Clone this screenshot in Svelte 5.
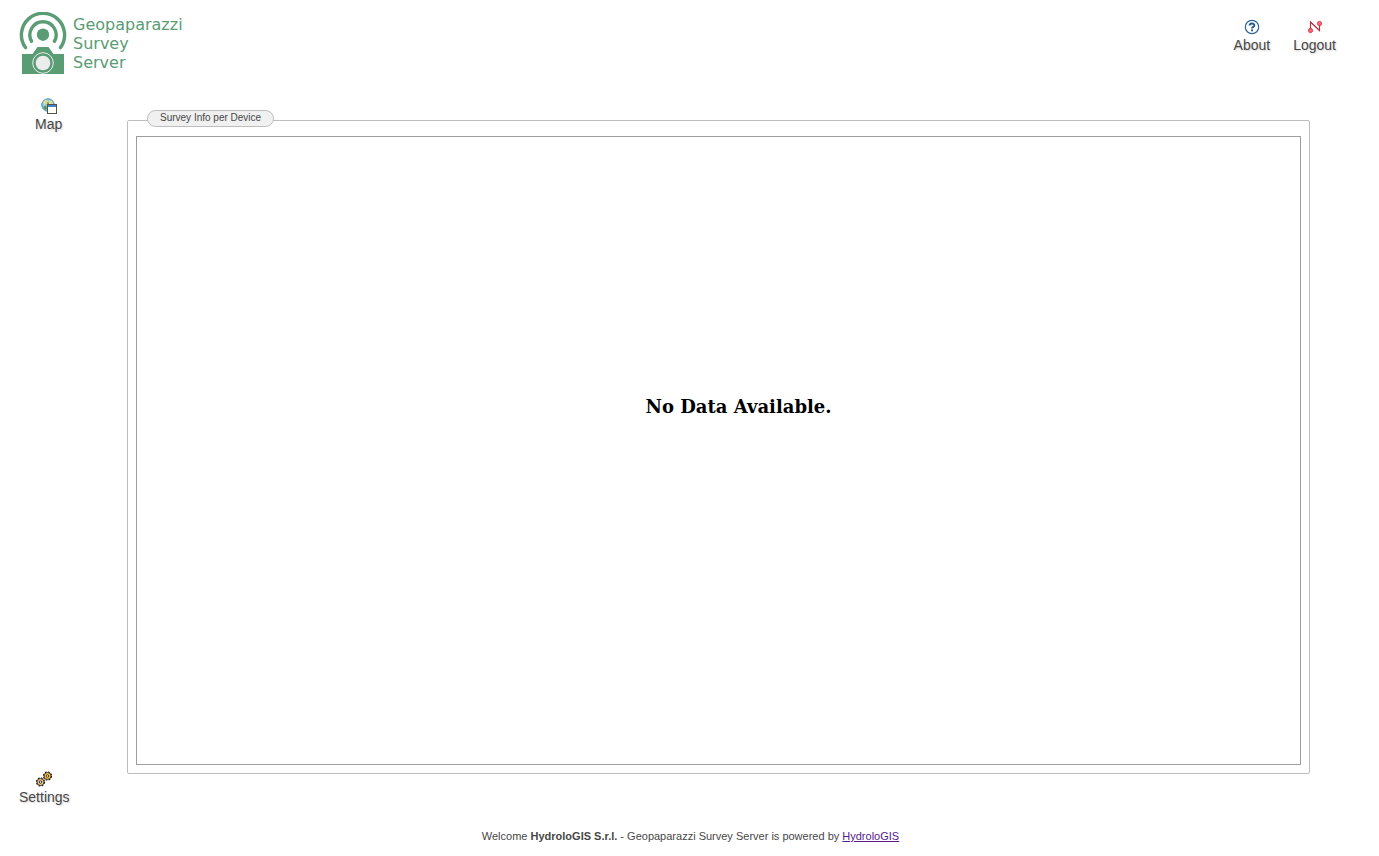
<script>
  const company = 'HydroloGIS';
</script>

<div class="page">
  <header>
    <div class="brand">
      <svg width="48" height="63" viewBox="0 0 48 63" aria-hidden="true">
        <g fill="none" stroke="#5a9c74" stroke-width="3.4" stroke-linecap="round">
          <path d="M6.500 35.600A21.600 21.600 0 1 1 41.500 35.600" />
          <path d="M12.600 29.300A13.100 13.100 0 1 1 35.400 29.300" />
        </g>
        <circle cx="24" cy="22.700" r="6.200" fill="#5a9c74" />
        <path fill="#5a9c74" d="M3 42H13.500L18.500 35H29.500L34.500 42H45V62H3Z" />
        <circle cx="24" cy="51" r="10.300" fill="none" stroke="#e8ece9" stroke-width="1" />
        <circle cx="24" cy="51" r="7.300" fill="#ececec" />
      </svg>
      <h1>Geopaparazzi<br />Survey<br />Server</h1>
    </div>
    <nav class="actions" aria-label="Account">
      <button type="button">
        <svg width="16" height="16" viewBox="0 0 16 16" aria-hidden="true">
          <circle cx="8" cy="8" r="6.700" fill="#fff" stroke="#2e6499" stroke-width="1.200" />
          <path d="M5.600 6.500C5.700 3.800 10.400 3.900 10.300 6.500C10.200 8 8 7.700 8 9.500" fill="none" stroke="#1f5790" stroke-width="1.900" />
          <path d="M7 10.500h2v1.700H7z" fill="#1f5790" />
        </svg>
        About
      </button>
      <button type="button">
        <svg width="16" height="16" viewBox="0 0 16 16" aria-hidden="true">
          <path d="M3.500 11V3L12.500 11.500V4" fill="none" stroke="#b0313f" stroke-width="1.200" />
          <circle cx="3.500" cy="11.500" r="2.100" fill="#f66a78" stroke="#e43b4d" />
          <circle cx="12.500" cy="4.500" r="2.100" fill="#f66a78" stroke="#e43b4d" />
        </svg>
        Logout
      </button>
    </nav>
  </header>

  <div class="body">
    <nav class="side" aria-label="Main">
      <button type="button" class="map">
        <svg width="16" height="16" viewBox="0 0 16 16" aria-hidden="true">
          <circle cx="7" cy="7" r="6.200" fill="#8fcbe5" stroke="#3c8fc0" />
          <path d="M2 4L5 1.500L7 3L5.500 6L3 7ZM8 2L11 3L12 6H8Z" fill="#e6dc8a" />
          <path d="M2 9L5 7.500L6 11L4 12ZM6 4L8 5L7 7Z" fill="#51965b" />
          <rect x="6.500" y="6.500" width="9" height="9" fill="#fff" stroke="#5c513f" />
          <path d="M7 7H15V9H7Z" fill="#3d86c9" />
        </svg>
        Map
      </button>
      <button type="button" class="settings">
        <svg width="16" height="16" viewBox="0 0 16 16" aria-hidden="true">
          {#each [[4.5, 11, '#e2c184'], [11.5, 5, '#f5b93c']] as [x, y, fill]}
            <g transform="translate({x} {y})">
              <circle r="4" fill="none" stroke="#17130f" stroke-width="1.200" stroke-dasharray="1.800 1.342" />
              <circle r="3.500" {fill} stroke="#17130f" stroke-width=".700" />
              <circle r="1.200" fill="#fff" stroke="#17130f" stroke-width=".800" />
            </g>
          {/each}
        </svg>
        Settings
      </button>
    </nav>

    <main>
      <h2>Survey Info per Device</h2>
      <div class="chart">
        <p>No Data Available.</p>
      </div>
    </main>
  </div>

  <footer>
    Welcome <strong>{company} S.r.l.</strong> - Geopaparazzi Survey Server is powered by
    <a href="#hydrologis">{company}</a>
  </footer>
</div>

<style>
  :global(body) {
    background: #fff;
  }
  .page {
    box-sizing: border-box;
    min-height: 100vh;
    display: flex;
    flex-direction: column;
    color: #474747;
    font-family: "Liberation Sans", Arial, sans-serif;
  }
  header {
    display: flex;
    justify-content: space-between;
    align-items: flex-start;
    padding: 12px 43px 0 19px;
  }
  .brand {
    display: flex;
    gap: 6px;
  }
  svg {
    display: block;
  }
  h1 {
    margin: 3px 0 0;
    color: #5a9c74;
    font: 400 16px/19px "DejaVu Sans", sans-serif;
  }
  .actions {
    display: flex;
    gap: 23px;
    padding-top: 7px;
  }
  button {
    display: flex;
    flex-direction: column;
    align-items: center;
    gap: 2px;
    padding: 0;
    border: 0;
    background: none;
    color: inherit;
    font: 14px/16px "Liberation Sans", Arial, sans-serif;
    text-shadow: 1px 1px 2px #d0d0d0;
    cursor: pointer;
  }
  .body {
    flex: 1;
    display: flex;
  }
  .side {
    width: 127px;
    flex: none;
    box-sizing: border-box;
    display: flex;
    flex-direction: column;
    justify-content: space-between;
    align-items: flex-start;
    padding: 23px 0 24px 19px;
  }
  .map {
    margin-left: 16px;
  }
  main {
    position: relative;
    flex: 1;
    box-sizing: border-box;
    display: flex;
    margin: 45px 69px 55px 0;
    padding: 15px 8px 8px;
    border: 1px solid #bdbdbd;
    border-radius: 2px;
  }
  h2 {
    position: absolute;
    top: -11px;
    left: 19px;
    margin: 0;
    padding: 0 12px 1px;
    border: 1px solid #bdbdbd;
    border-radius: 9px;
    background: #f0f0f0;
    font-size: 10px;
    font-weight: 400;
    line-height: 14px;
  }
  .chart {
    flex: 1;
    display: flex;
    flex-direction: column;
    align-items: center;
    padding-left: 40px;
    border: 1px solid #9d9d9d;
  }
  .chart::before {
    content: "";
    flex: 3;
  }
  .chart::after {
    content: "";
    flex: 4;
  }
  p {
    margin: 0;
    color: #000;
    font: 700 18px/20px "DejaVu Serif", serif;
  }
  footer {
    padding: 0 0 13px 2px;
    text-align: center;
    font-size: 11px;
    line-height: 14px;
  }
  a {
    color: #551a8b;
  }
</style>
